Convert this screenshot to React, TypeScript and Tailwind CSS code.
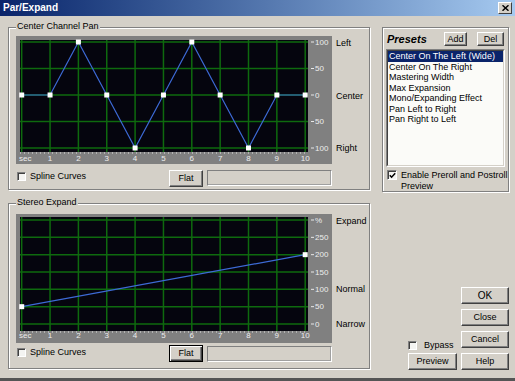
import React from "react";

const XS = Array.from({ length: 11 }, (_, i) => 5.7 + i * 28.35);

type ChartProps = {
  h: number;
  top: number;
  bottom: number;
  gridY: number[];
  right: string[];
  curve: [number, number][];
  pts: [number, number][];
  labelY: number;
};

function Chart({ h, top, bottom, gridY, right, curve, pts, labelY }: ChartProps) {
  return (
    <svg width={316} height={h} className="block shrink-0 bg-[#808080]">
      <rect x={4} y={top} width={288} height={bottom - top} fill="#05050e" />
      {XS.map((x, i) => (
        <line key={"v" + i} x1={x} x2={x} y1={top} y2={bottom} stroke="#0e6a0e" strokeWidth={1.5} />
      ))}
      {gridY.map((y, i) => (
        <line key={"h" + i} x1={4} x2={292} y1={y} y2={y} stroke="#0e6a0e" strokeWidth={1.5} />
      ))}
      <polyline
        points={curve.map(([x, y]) => `${x},${y}`).join(" ")}
        fill="none"
        stroke="#3d6ad6"
        strokeWidth={1.2}
      />
      {pts.map(([x, y], i) => (
        <rect key={"p" + i} x={Math.min(x - 2.5, 287)} y={y - 2.5} width={5} height={5} fill="#ffffff" />
      ))}
      {gridY.map((y, i) => (
        <g key={"r" + i}>
          <line x1={295} x2={298} y1={y} y2={y} stroke="#e8e8e8" strokeWidth={1} />
          <text x={299} y={y + 2.8} fontSize={8} fill="#ededed" fontFamily="Liberation Sans, Arial, sans-serif">
            {right[i]}
          </text>
        </g>
      ))}
      <line x1={4} x2={292} y1={bottom + 1} y2={bottom + 1} stroke="#e6e6e6" strokeWidth={1} strokeDasharray="1 3" />
      <text x={3} y={labelY} fontSize={8} fill="#ededed" fontFamily="Liberation Sans, Arial, sans-serif">
        sec
      </text>
      {XS.slice(1).map((x, i) => (
        <text
          key={"b" + i}
          x={x}
          y={labelY}
          fontSize={8}
          textAnchor="middle"
          fill="#ededed"
          fontFamily="Liberation Sans, Arial, sans-serif"
        >
          {i + 1}
        </text>
      ))}
    </svg>
  );
}

function Btn({ label, className = "", def = false }: { label: string; className?: string; def?: boolean }) {
  const base = def
    ? "border border-black shadow-[inset_1px_1px_0_#ffffff,inset_-1px_-1px_0_#404040,inset_-2px_-2px_0_#808080]"
    : "border border-t-white border-l-white border-r-[#404040] border-b-[#404040] shadow-[inset_-1px_-1px_0_#808080]";
  return (
    <div className={`flex items-center justify-center bg-[#d4d0c8] text-[9px] leading-none text-black ${base} ${className}`}>
      {label}
    </div>
  );
}

function Check({ checked = false, size = "w-[9px] h-[9px]" }: { checked?: boolean; size?: string }) {
  return (
    <div
      className={`${size} shrink-0 bg-[#f4f4f2] border border-t-[#808080] border-l-[#808080] border-r-white border-b-white shadow-[inset_1px_1px_0_#404040] flex items-center justify-center`}
    >
      {checked && (
        <svg width="7" height="7" viewBox="0 0 7 7">
          <path d="M0.8 3.2 L2.6 5.2 L6.2 1.2" fill="none" stroke="#000" strokeWidth="1.5" />
        </svg>
      )}
    </div>
  );
}

function Field() {
  return (
    <div className="w-[125px] h-[16px] border border-t-[#808080] border-l-[#808080] border-r-white border-b-white shadow-[inset_-1px_-1px_0_#a0a0a0]" />
  );
}

function Group({ label, className = "", children }: { label?: string; className?: string; children: React.ReactNode }) {
  return (
    <div className={`relative border border-[#808080] shadow-[inset_1px_1px_0_#ffffff,1px_1px_0_#ffffff] ${className}`}>
      {label && (
        <span className="absolute left-[7px] top-[-7px] bg-[#d4d0c8] px-[1px] text-[9px] leading-[11px] text-black">
          {label}
        </span>
      )}
      {children}
    </div>
  );
}

const panY = (v: number) => 59 - v * 0.53;
const panVals = [0, 0, 100, 0, -100, 0, 100, 0, -100, 0, 0];
const panPts: [number, number][] = panVals.map((v, i) => [XS[i], panY(v)]);

const expY = (v: number) => 110 - (v / 300) * 104;
const expPts: [number, number][] = [
  [XS[0], expY(50)],
  [XS[10], expY(200)],
];

const presets = [
  "Center On The Left (Wide)",
  "Center On The Right",
  "Mastering Width",
  "Max Expansion",
  "Mono/Expanding Effect",
  "Pan Left to Right",
  "Pan Right to Left",
];

export default function App() {
  return (
    <div className="w-[515px] h-[381px] bg-[#d4d0c8] flex flex-col overflow-hidden font-['Liberation_Sans',Arial,sans-serif] text-black">
      {/* title bar */}
      <div className="h-[16px] shrink-0 flex items-center bg-linear-to-r from-[#0a246a] to-[#a6caf0] pl-[3px]">
        <span className="text-white font-bold text-[10px] leading-none">Par/Expand</span>
        <div className="ml-auto mr-[3px] w-[14px] h-[12px] bg-[#d4d0c8] border border-t-white border-l-white border-r-[#404040] border-b-[#404040] flex items-center justify-center">
          <svg width="7" height="6" viewBox="0 0 7 6">
            <path d="M0.5 0.3 L6.5 5.7 M6.5 0.3 L0.5 5.7" stroke="#000" strokeWidth="1.5" />
          </svg>
        </div>
      </div>

      {/* body */}
      <div className="flex-1 flex">
        {/* left column */}
        <div className="ml-[8px] w-[362px] flex flex-col">
          <Group label="Center Channel Pan" className="mt-[11px] h-[163px]">
            <div className="pl-[7px] pt-[8px] flex flex-col">
              <div className="flex">
                <Chart
                  h={128}
                  top={4}
                  bottom={116}
                  gridY={[6, 32.5, 59, 85.5, 112]}
                  right={["100", "50", "0", "50", "100"]}
                  curve={panPts}
                  pts={panPts}
                  labelY={125}
                />
                <div className="ml-[4px] mt-[2px] flex flex-col text-[9px] leading-[11px]">
                  <span>Left</span>
                  <span className="mt-[42px]">Center</span>
                  <span className="mt-[41px]">Right</span>
                </div>
              </div>
              <div className="flex items-start mt-[6px] h-[17px]">
                <div className="w-[153px] pl-[1px] mt-[1px] flex items-center">
                  <Check />
                  <span className="ml-[4px] text-[9px] leading-[10px]">Spline Curves</span>
                </div>
                <Btn label="Flat" className="w-[34px] h-[17px]" />
                <div className="ml-[4px]">
                  <Field />
                </div>
              </div>
            </div>
          </Group>

          <Group label="Stereo Expand" className="mt-[13px] h-[166px]">
            <div className="pl-[7px] pt-[10px] flex flex-col">
              <div className="flex">
                <Chart
                  h={129}
                  top={3}
                  bottom={117}
                  gridY={[6, 23.33, 40.67, 58, 75.33, 92.67, 110]}
                  right={["%", "250", "200", "150", "100", "50", "0"]}
                  curve={expPts}
                  pts={expPts}
                  labelY={124}
                />
                <div className="ml-[4px] mt-[2px] flex flex-col text-[9px] leading-[11px]">
                  <span>Expand</span>
                  <span className="mt-[57px]">Normal</span>
                  <span className="mt-[24px]">Narrow</span>
                </div>
              </div>
              <div className="flex items-start mt-[2px] h-[17px]">
                <div className="w-[153px] pl-[1px] mt-[2px] flex items-center">
                  <Check />
                  <span className="ml-[4px] text-[9px] leading-[10px]">Spline Curves</span>
                </div>
                <Btn label="Flat" def className="w-[34px] h-[17px]" />
                <div className="ml-[4px] mt-[1px]">
                  <Field />
                </div>
              </div>
            </div>
          </Group>
        </div>

        {/* right column */}
        <div className="ml-[12px] w-[127px] flex flex-col">
          <Group className="mt-[11px] h-[165px]">
            <div className="pl-[3px] pt-[4px] flex flex-col">
              <div className="flex items-center h-[14px]">
                <span className="ml-[1px] flex-1 text-[11px] font-bold italic leading-none">Presets</span>
                <Btn label="Add" className="w-[23px] h-[14px]" />
                <Btn label="Del" className="ml-[10px] mr-[4px] w-[27px] h-[14px]" />
              </div>
              <div className="mt-[3px] w-[119px] h-[118px] border border-t-[#808080] border-l-[#808080] border-r-white border-b-white">
                <div className="h-full bg-[#fbfbf8] border border-t-[#404040] border-l-[#404040] border-r-[#d4d0c8] border-b-[#d4d0c8] flex flex-col">
                  {presets.map((p, i) => (
                    <div
                      key={p}
                      className={`pl-[1px] text-[9px] leading-[10.5px] whitespace-nowrap ${
                        i === 0 ? "bg-[#0a246a] text-white" : "text-black"
                      }`}
                    >
                      {p}
                    </div>
                  ))}
                </div>
              </div>
              <div className="mt-[3px] ml-[1px] flex items-start">
                <Check checked size="w-[10px] h-[10px]" />
                <span className="ml-[4px] -mt-[0.5px] text-[9px] leading-[11px]">
                  Enable Preroll and Postroll
                  <br />
                  Preview
                </span>
              </div>
            </div>
          </Group>

          <div className="flex-1 flex items-end justify-end pb-[8px]">
            <div className="flex flex-col w-[49px]">
              <div className="flex items-center h-[9px]">
                <Check />
                <span className="ml-[7px] text-[9px] leading-none">Bypass</span>
              </div>
              <Btn label="Preview" className="mt-[3px] w-[49px] h-[17px]" />
            </div>
            <div className="ml-[4px] flex flex-col gap-[5px] w-[48px]">
              <Btn label="OK" className="h-[17px] !text-[10px]" />
              <Btn label="Close" className="h-[17px]" />
              <Btn label="Cancel" className="h-[17px]" />
              <Btn label="Help" className="h-[17px]" />
            </div>
          </div>
        </div>
      </div>

      {/* bottom edge */}
      <div className="h-[3px] shrink-0 bg-[#555555]" />
    </div>
  );
}
